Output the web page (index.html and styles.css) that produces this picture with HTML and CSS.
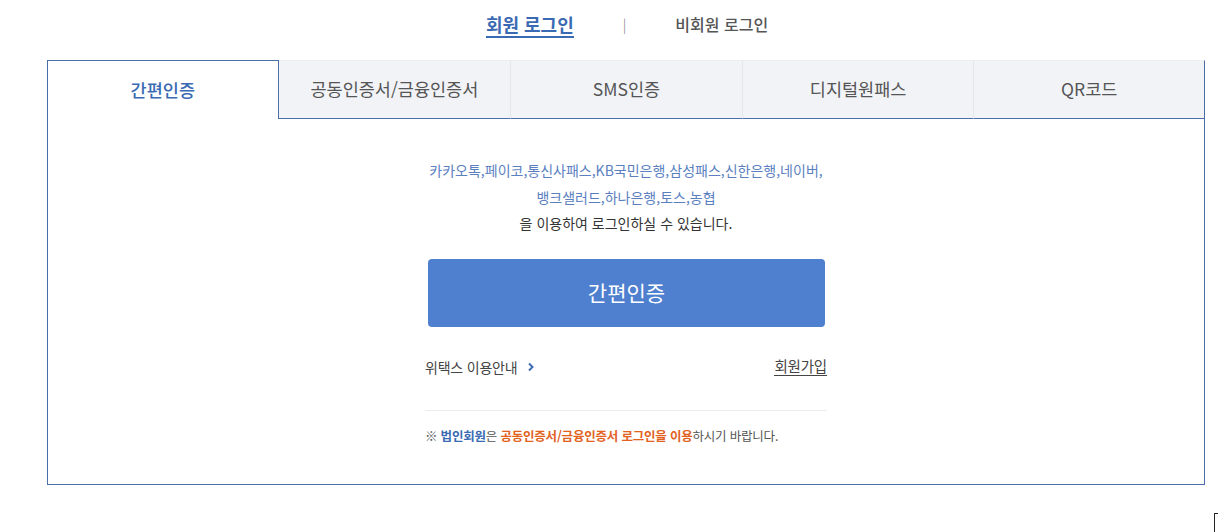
FILE: index.html
```html
<!DOCTYPE html>
<html lang="ko">
<head>
<meta charset="utf-8">
<title>로그인</title>
<link rel="stylesheet" href="styles.css">
</head>
<body>
<div class="wrap">
  <nav class="top-nav">
    <a class="top-link active">회원 로그인</a>
    <span class="sep">|</span>
    <a class="top-link">비회원 로그인</a>
  </nav>
  <div class="box">
    <ul class="tabs">
      <li class="tab active">간편인증</li>
      <li class="tab">공동인증서/금융인증서</li>
      <li class="tab">SMS인증</li>
      <li class="tab">디지털원패스</li>
      <li class="tab">QR코드</li>
    </ul>
    <div class="panel">
      <p class="desc">
        <span class="providers">카카오톡,페이코,통신사패스,KB국민은행,삼성패스,신한은행,네이버,<br>뱅크샐러드,하나은행,토스,농협</span><br>
        을 이용하여 로그인하실 수 있습니다.
      </p>
      <button class="btn">간편인증</button>
      <div class="links">
        <a class="guide">위택스 이용안내
          <svg class="chev" width="8" height="10" viewBox="0 0 8 10"><path d="M2 1.5 L5.5 5 L2 8.5" fill="none" stroke="#3f6db5" stroke-width="2"/></svg>
        </a>
        <a class="join">회원가입</a>
      </div>
      <p class="notice">※ <b class="blue">법인회원</b>은 <b class="orange">공동인증서/금융인증서 로그인을 이용</b>하시기 바랍니다.</p>
    </div>
  </div>
</div>
<span class="cursor"></span>
</body>
</html>
```
FILE: styles.css
```css
* { box-sizing: border-box; }
html, body { margin: 0; padding: 0; background: #fff; }
body {
  font-family: "Noto Sans CJK KR", "Noto Sans", sans-serif;
  color: #333;
  width: 1218px;
  height: 532px;
  overflow: hidden;
  position: relative;
}
.wrap {
  margin-left: 47px;
  width: 1158px;
}
.top-nav {
  height: 60px;
  display: flex;
  justify-content: center;
  align-items: center;
  gap: 49px;
  padding-bottom: 12px;
  padding-left: 2px;
}
.top-link {
  font-size: 16px;
  color: #555;
  font-weight: 500;
  line-height: 22px;
}
.top-link.active {
  font-size: 18px;
  color: #3a6ab3;
  font-weight: 700;
  border-bottom: 2px solid #3a6ab3;
  line-height: 24px;
  margin-top: 1px;
}
.sep {
  color: #777;
  font-size: 14px;
  font-weight: 300;
}
.box {
  border: 1px solid #4a6ea8;
  border-top: none;
  height: 425px;
}
.tabs {
  list-style: none;
  margin: 0 -1px;
  padding: 0;
  display: grid;
  grid-template-columns: repeat(5, 1fr);
  height: 59px;
}
.tab {
  display: flex;
  align-items: center;
  justify-content: center;
  font-size: 17.5px;
  color: #555;
  font-weight: 400;
  background: #f1f3f7;
  border-top: 1px solid #eceef2;
  border-left: 1px solid #e3e6ec;
  border-bottom: 1px solid #4a6ea8;
  padding-bottom: 2px;
}
.tab.active + .tab { border-left: none; }
.tab:last-child { border-right: 1px solid #4a6ea8; border-top-color: #eceef2; }
.tab.active {
  background: #fff;
  color: #3a6ab3;
  font-weight: 500;
  border: 1px solid #4a6ea8;
  border-bottom: none;
}
.panel {
  width: 402px;
  margin: 0 auto;
  padding-top: 38px;
  text-align: center;
}
.desc {
  margin: 0;
  font-size: 14px;
  line-height: 26.5px;
  color: #333;
}
.providers { color: #5b7fbf; }
.btn {
  display: block;
  width: 397px;
  height: 68px;
  margin: 22px auto 0 3px;
  border: none;
  border-radius: 4px;
  background: #4f80cf;
  color: #fff;
  font-family: inherit;
  font-size: 21px;
  font-weight: 400;
  padding-bottom: 3px;
}
.links {
  display: flex;
  justify-content: space-between;
  margin-top: 30px;
  padding-bottom: 8px;
  border-bottom: 1px solid #ececec;
  height: 54px;
  align-items: flex-start;
}
.guide {
  font-size: 14px;
  color: #444;
  display: flex;
  align-items: center;
  gap: 10px;
  letter-spacing: -0.2px;
}
.chev { margin-top: 1px; }
.join {
  font-size: 14.5px;
  color: #444;
  border-bottom: 1px solid #444;
  line-height: 18px;
  letter-spacing: -0.2px;
}
.notice {
  margin: 15px 0 0 0;
  text-align: left;
  font-size: 12.5px;
  color: #555;
  letter-spacing: -0.2px;
}
.notice .blue { color: #3a6ab3; }
.notice .orange { color: #e2621e; }
.cursor {
  position: absolute;
  left: 1214px;
  top: 513px;
  width: 4px;
  height: 19px;
  border: 1px solid #222;
  border-right: none;
  border-bottom: none;
}
```
